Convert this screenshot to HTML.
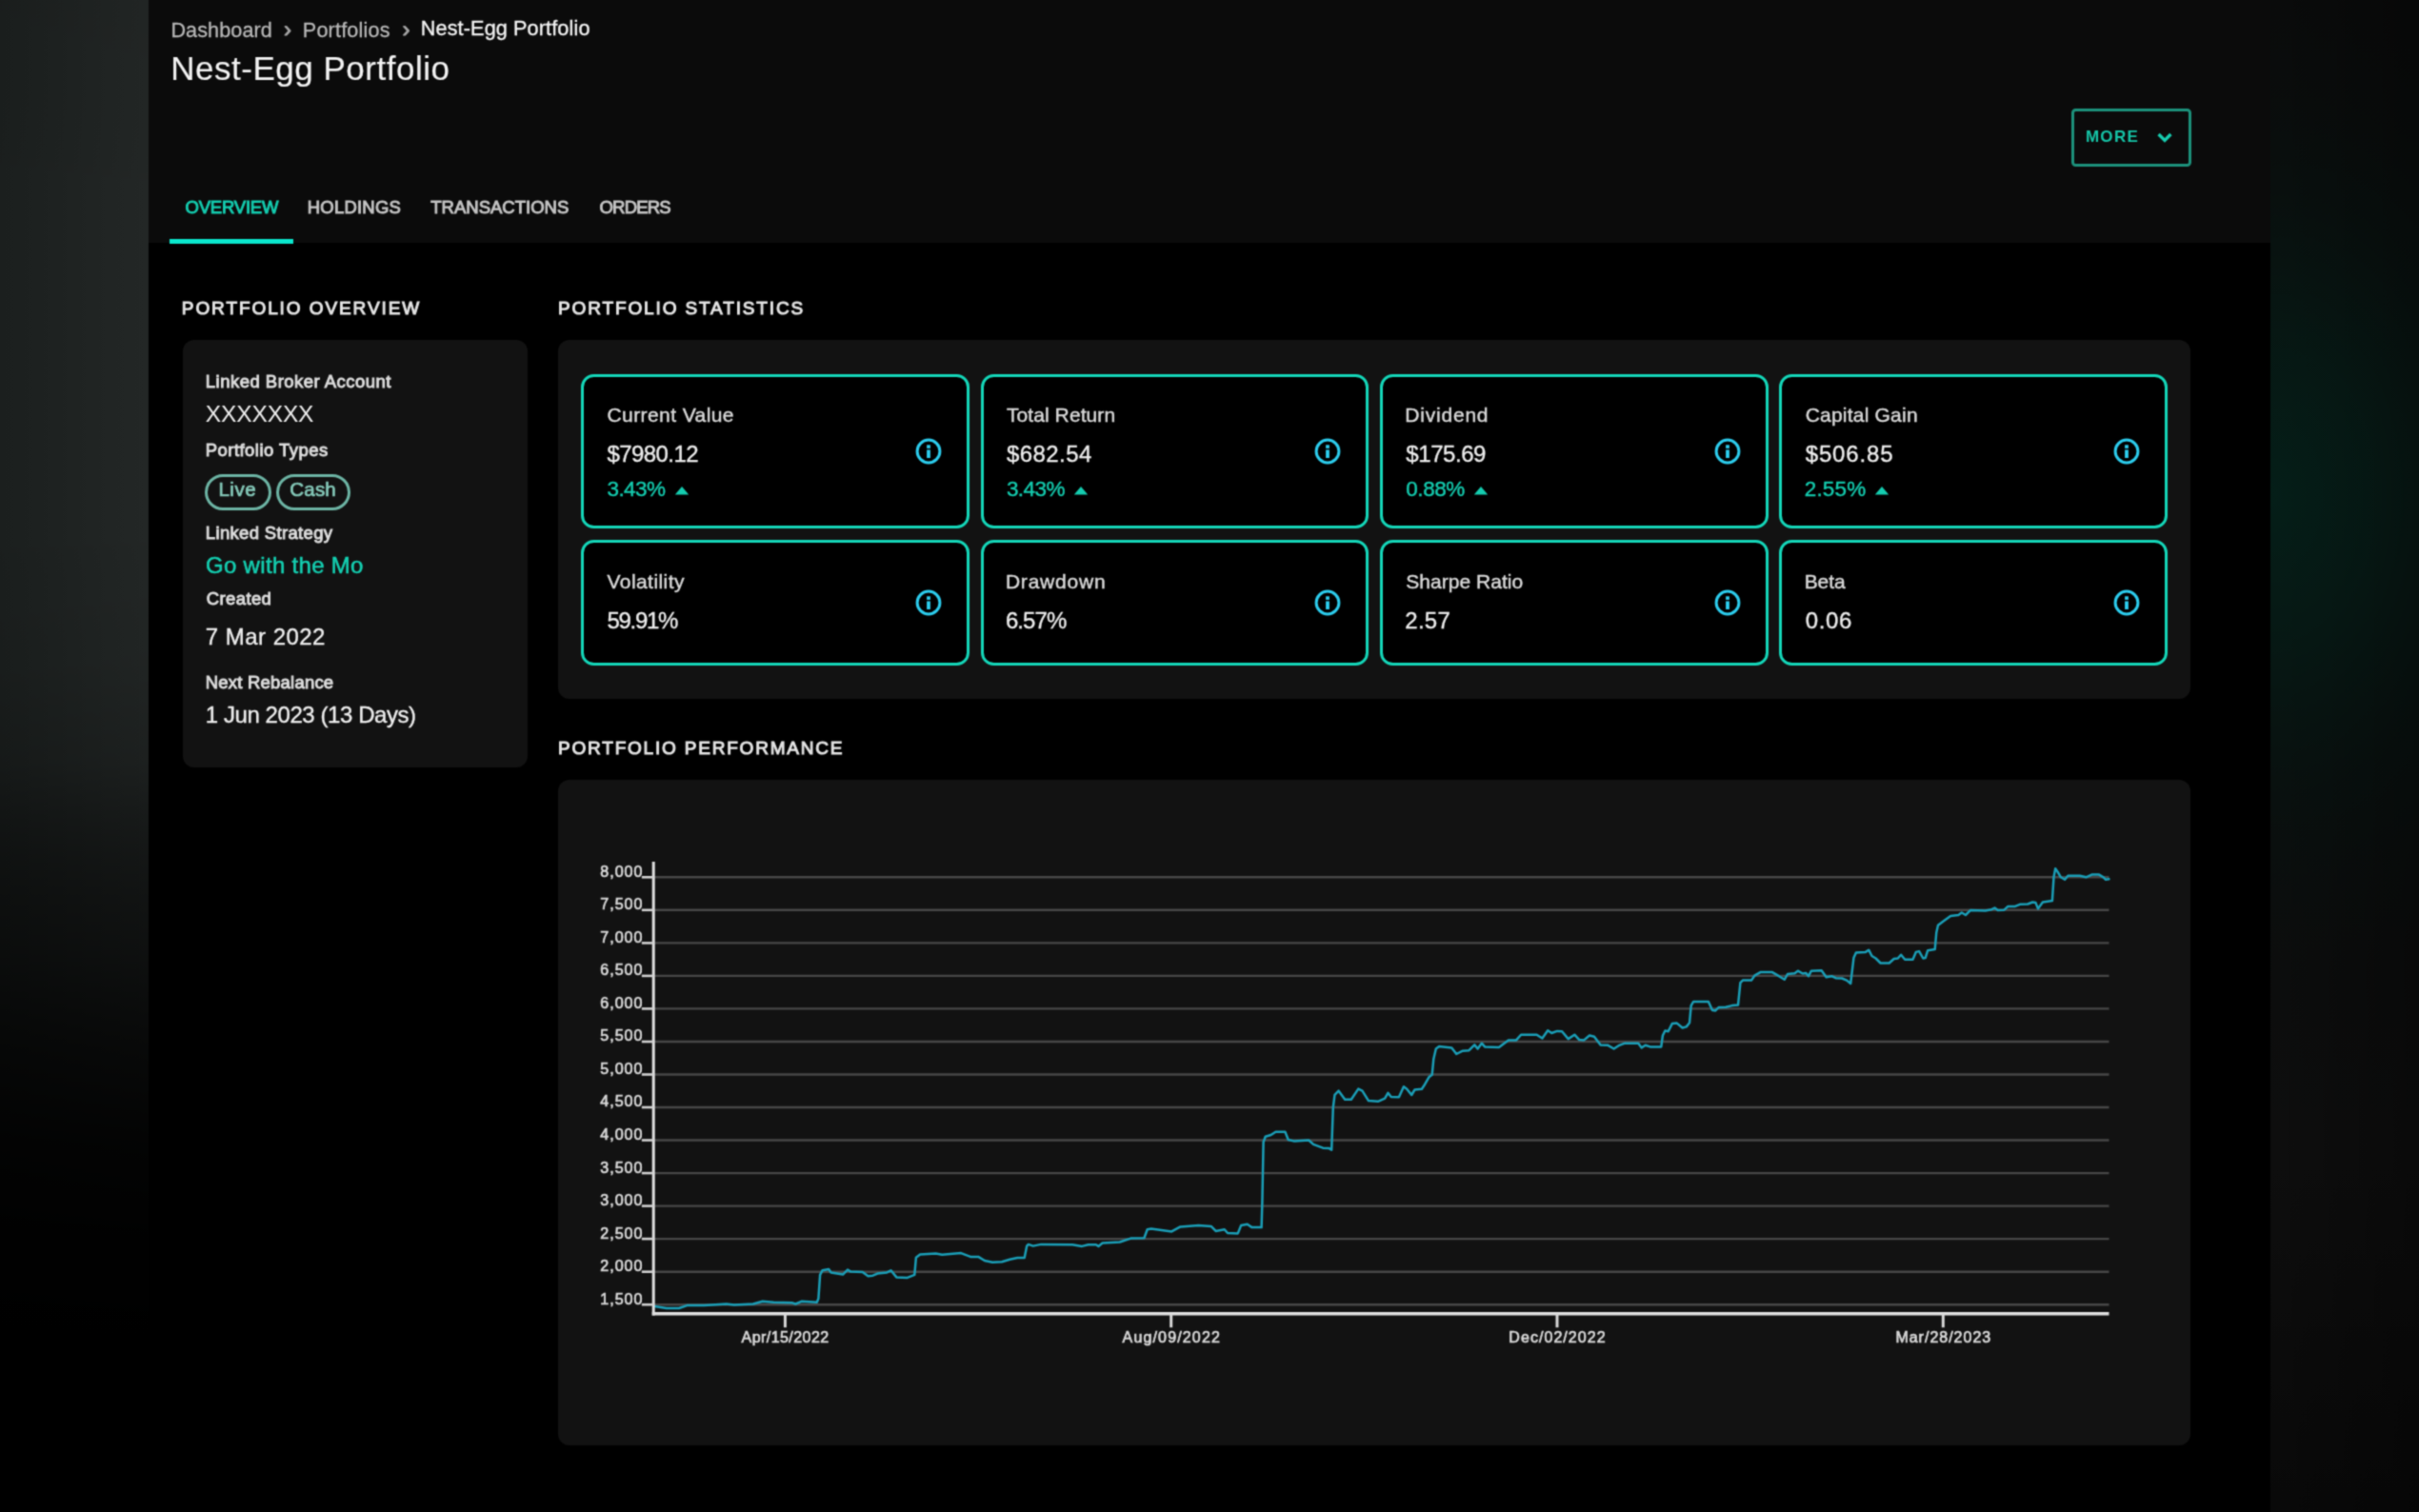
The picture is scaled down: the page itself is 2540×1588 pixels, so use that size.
<!DOCTYPE html>
<html lang="en">
<head>
<meta charset="utf-8">
<title>Nest-Egg Portfolio</title>
<style>
*{box-sizing:border-box;margin:0;padding:0}
html,body{width:2540px;height:1588px;overflow:hidden;background:#000}
body{font-family:"Liberation Sans",sans-serif;color:#e6e6e6;position:relative}
a{text-decoration:none}
#page{position:absolute;left:0;top:0;width:2540px;height:1588px;overflow:hidden;will-change:transform;filter:url(#soft)}
.x{position:absolute;white-space:nowrap;line-height:1;font-weight:400;display:block}
#left{position:absolute;left:0;top:0;width:156px;height:1588px;
  background:linear-gradient(180deg,rgba(0,0,0,.05) 0%,rgba(0,0,0,0) 16%,rgba(0,0,0,0) 34%,rgba(0,0,0,.07) 44%,rgba(0,0,0,.19) 50.4%,rgba(0,0,0,.33) 53.8%,rgba(0,0,0,.43) 56.7%,rgba(0,0,0,.51) 59.5%,rgba(0,0,0,.59) 63%,rgba(0,0,0,.77) 69.3%,rgba(0,0,0,.9) 75.6%,rgba(0,0,0,.97) 82%,#000 90%),linear-gradient(90deg,#1b1f1e 0%,#232726 100%)}
#right{position:absolute;left:2384px;top:0;width:156px;height:1588px;
  background:radial-gradient(ellipse 350px 520px at 0px 520px,rgba(3,36,28,.75) 0%,rgba(3,36,28,.5) 30%,rgba(3,36,28,.33) 45%,rgba(3,36,28,.17) 61%,rgba(3,36,28,.06) 80%,rgba(3,36,28,0) 100%),linear-gradient(90deg,rgba(0,0,0,0) 0%,rgba(0,0,0,.3) 100%),linear-gradient(180deg,#0a0b0b 0%,#0a0c0c 50%,#0c0d0d 65%,#0e0e0e 76%,#0b0b0b 90%,#090909 100%)}
#main{position:absolute;left:156px;top:0;width:2228px;height:1588px;background:#000}
#head{position:absolute;left:0;top:0;width:2228px;height:255.4px;background:#0b0b0b}
.panel{position:absolute;background:#121212;border-radius:12px}
.card{position:absolute;display:block;background:#000;border:3px solid #14d8ba;border-radius:13.5px;width:407.6px}
.pill{position:absolute;display:block;height:38.4px;border:3px solid #6db5a5;border-radius:19.2px}
.more{position:absolute;display:block;background:transparent;border:3px solid #1c927c;border-radius:4.5px;font-family:inherit;cursor:pointer}
.ink{position:absolute;left:178.4px;top:250.7px;width:129.6px;height:4.9px;background:#0ae8ce}
</style>
</head>
<body>
<svg width="0" height="0" style="position:absolute" aria-hidden="true"><filter id="soft" x="0" y="0" width="100%" height="100%" color-interpolation-filters="sRGB"><feConvolveMatrix order="3" kernelMatrix="0.04 0.12 0.04 0.12 0.36 0.12 0.04 0.12 0.04" edgeMode="duplicate" preserveAlpha="false"/></filter></svg>
<div id="page">
<aside id="left"></aside>
<div id="right"></div>
<div id="main"><div id="head"></div></div>

<header>
<nav aria-label="Breadcrumb">
<a href="#" class="x" style="left:179.4px;top:20.5px;font-size:21.6px;letter-spacing:0.1px;color:#b8b8b8;-webkit-text-stroke:0.3px #b8b8b8;">Dashboard</a>
<span class="x" style="left:298px;top:18.6px;font-size:24px;color:#a6a6a6;-webkit-text-stroke:.9px #a6a6a6">›</span>
<a href="#" class="x" style="left:317.8px;top:20.5px;font-size:21.6px;letter-spacing:0.19px;color:#b8b8b8;-webkit-text-stroke:0.3px #b8b8b8;">Portfolios</a>
<span class="x" style="left:422.4px;top:18.6px;font-size:24px;color:#a6a6a6;-webkit-text-stroke:.9px #a6a6a6">›</span>
<span class="x" style="left:441.8px;top:18.9px;font-size:21.6px;letter-spacing:0.14px;color:#f4f4f4;-webkit-text-stroke:0.35px #f4f4f4;">Nest-Egg Portfolio</span>
</nav>
<h1 class="x" style="left:179.3px;top:54.2px;font-size:35px;letter-spacing:0.51px;color:#f4f4f4;-webkit-text-stroke:0.15px #f4f4f4;">Nest-Egg Portfolio</h1>
<button type="button" class="more" style="left:2174.7px;top:113.8px;width:126.5px;height:61.3px">
<span class="x" style="left:12.2px;top:18.4px;font-size:17px;font-weight:700;letter-spacing:1.33px;color:#15c6a8;">MORE</span>
<svg class="x" style="left:84.9px;top:20.4px" width="20" height="16" viewBox="0 0 20 16"><path d="M3.6 4 L10 10.4 L16.4 4" fill="none" stroke="#17cdb0" stroke-width="3.4"/></svg>
</button>
<nav aria-label="Portfolio sections">
<a href="#" class="x" style="left:194.5px;top:209.0px;font-size:18.5px;letter-spacing:-0.2px;color:#14cdb0;-webkit-text-stroke:0.95px #14cdb0;">OVERVIEW</a>
<a href="#" class="x" style="left:322.8px;top:209.0px;font-size:18.5px;letter-spacing:0.2px;color:#c4c4c4;-webkit-text-stroke:0.95px #c4c4c4;">HOLDINGS</a>
<a href="#" class="x" style="left:452.2px;top:209.0px;font-size:18.5px;letter-spacing:0.02px;color:#c4c4c4;-webkit-text-stroke:0.95px #c4c4c4;">TRANSACTIONS</a>
<a href="#" class="x" style="left:629.5px;top:209.0px;font-size:18.5px;letter-spacing:-0.8px;color:#c4c4c4;-webkit-text-stroke:0.95px #c4c4c4;">ORDERS</a>
<div class="ink"></div>
</nav>
</header>

<section aria-label="Portfolio overview">
<h2 class="x" style="left:190.8px;top:313.6px;font-size:19px;letter-spacing:1.92px;color:#e4e4e4;-webkit-text-stroke:1.0px #e4e4e4;">PORTFOLIO OVERVIEW</h2>
<div class="panel" style="left:192.3px;top:356.7px;width:362px;height:449px"></div>
<dl>
<dt class="x" style="left:215.8px;top:391.6px;font-size:18.5px;letter-spacing:0.48px;color:#dcdcdc;-webkit-text-stroke:0.95px #dcdcdc;">Linked Broker Account</dt>
<dd class="x" style="left:215.8px;top:422.5px;font-size:24.5px;letter-spacing:-0.12px;color:#f0f0f0;">XXXXXXX</dd>
<dt class="x" style="left:215.8px;top:463.8px;font-size:18.5px;letter-spacing:0.45px;color:#dcdcdc;-webkit-text-stroke:0.95px #dcdcdc;">Portfolio Types</dt>
<dd><span class="pill" style="left:214.9px;top:497.8px;width:70.2px"><span class="x" style="left:11.5px;top:3.7px;font-size:20.5px;letter-spacing:0.53px;color:#84c8b8;-webkit-text-stroke:0.7px #84c8b8;">Live</span></span>
<span class="pill" style="left:289.7px;top:497.8px;width:78.1px"><span class="x" style="left:11.6px;top:3.7px;font-size:20.5px;letter-spacing:0.2px;color:#84c8b8;-webkit-text-stroke:0.7px #84c8b8;">Cash</span></span></dd>
<dt class="x" style="left:215.8px;top:551.0px;font-size:18.5px;letter-spacing:0.34px;color:#dcdcdc;-webkit-text-stroke:0.95px #dcdcdc;">Linked Strategy</dt>
<a href="#" class="x" style="left:216.0px;top:582.4px;font-size:24px;letter-spacing:0.31px;color:#14d0b2;-webkit-text-stroke:0.5px #14d0b2;">Go with the Mo</a>
<dt class="x" style="left:216.8px;top:619.8px;font-size:18.5px;letter-spacing:0.38px;color:#dcdcdc;-webkit-text-stroke:0.95px #dcdcdc;">Created</dt>
<dd class="x" style="left:215.8px;top:657.2px;font-size:24px;letter-spacing:0.47px;color:#f0f0f0;-webkit-text-stroke:0.35px #f0f0f0;">7 Mar 2022</dd>
<dt class="x" style="left:215.8px;top:708.1px;font-size:18.5px;letter-spacing:0.21px;color:#dcdcdc;-webkit-text-stroke:0.95px #dcdcdc;">Next Rebalance</dt>
<dd class="x" style="left:215.8px;top:739.3px;font-size:24px;letter-spacing:-0.43px;color:#f0f0f0;-webkit-text-stroke:0.35px #f0f0f0;">1 Jun 2023 (13 Days)</dd>
</dl>
</section>

<section aria-label="Portfolio statistics">
<h2 class="x" style="left:586.0px;top:313.6px;font-size:19px;letter-spacing:1.87px;color:#e4e4e4;-webkit-text-stroke:1.0px #e4e4e4;">PORTFOLIO STATISTICS</h2>
<div class="panel" style="left:585.6px;top:356.6px;width:1714.6px;height:377.5px"></div>
<article class="card" style="left:610.2px;top:392.5px;height:162.2px">
<h3 class="x" style="left:24.3px;top:29.9px;font-size:21px;letter-spacing:0.42px;color:#dadada;-webkit-text-stroke:0.45px #dadada;">Current Value</h3>
<p class="x" style="left:24.3px;top:69.7px;font-size:24px;letter-spacing:-0.57px;color:#efefef;-webkit-text-stroke:0.35px #efefef;">$7980.12</p>
<span class="x" style="left:24.3px;top:107.2px;font-size:22.5px;letter-spacing:-0.57px;color:#14cdb0;-webkit-text-stroke:0.4px #14cdb0;">3.43%</span>
<svg class="x" style="left:94.6px;top:114.1px" width="16" height="10" viewBox="0 0 16 10"><path d="M0.8 9.4 L8 1 L15.2 9.4 Z" fill="#14cdb0"/></svg>
<svg class="x" style="left:346.8px;top:63.1px" width="30" height="30" viewBox="0 0 30 30"><circle cx="15" cy="15" r="11.9" fill="none" stroke="#2ccdee" stroke-width="3"/><rect x="13.1" y="8.3" width="3.8" height="3.6" fill="#2ccdee"/><rect x="13.1" y="13.4" width="3.8" height="8.6" fill="#2ccdee"/></svg>
</article>
<article class="card" style="left:1029.6px;top:392.5px;height:162.2px">
<h3 class="x" style="left:24.3px;top:29.9px;font-size:21px;letter-spacing:0.09px;color:#dadada;-webkit-text-stroke:0.45px #dadada;">Total Return</h3>
<p class="x" style="left:24.3px;top:69.7px;font-size:24px;letter-spacing:0.45px;color:#efefef;-webkit-text-stroke:0.35px #efefef;">$682.54</p>
<span class="x" style="left:24.3px;top:107.2px;font-size:22.5px;letter-spacing:-0.57px;color:#14cdb0;-webkit-text-stroke:0.4px #14cdb0;">3.43%</span>
<svg class="x" style="left:94.6px;top:114.1px" width="16" height="10" viewBox="0 0 16 10"><path d="M0.8 9.4 L8 1 L15.2 9.4 Z" fill="#14cdb0"/></svg>
<svg class="x" style="left:346.8px;top:63.1px" width="30" height="30" viewBox="0 0 30 30"><circle cx="15" cy="15" r="11.9" fill="none" stroke="#2ccdee" stroke-width="3"/><rect x="13.1" y="8.3" width="3.8" height="3.6" fill="#2ccdee"/><rect x="13.1" y="13.4" width="3.8" height="8.6" fill="#2ccdee"/></svg>
</article>
<article class="card" style="left:1449.0px;top:392.5px;height:162.2px">
<h3 class="x" style="left:23.3px;top:29.9px;font-size:21px;letter-spacing:0.79px;color:#dadada;-webkit-text-stroke:0.45px #dadada;">Dividend</h3>
<p class="x" style="left:24.3px;top:69.7px;font-size:24px;letter-spacing:-0.43px;color:#efefef;-webkit-text-stroke:0.35px #efefef;">$175.69</p>
<span class="x" style="left:24.3px;top:107.2px;font-size:22.5px;letter-spacing:-0.45px;color:#14cdb0;-webkit-text-stroke:0.4px #14cdb0;">0.88%</span>
<svg class="x" style="left:95.1px;top:114.1px" width="16" height="10" viewBox="0 0 16 10"><path d="M0.8 9.4 L8 1 L15.2 9.4 Z" fill="#14cdb0"/></svg>
<svg class="x" style="left:346.8px;top:63.1px" width="30" height="30" viewBox="0 0 30 30"><circle cx="15" cy="15" r="11.9" fill="none" stroke="#2ccdee" stroke-width="3"/><rect x="13.1" y="8.3" width="3.8" height="3.6" fill="#2ccdee"/><rect x="13.1" y="13.4" width="3.8" height="8.6" fill="#2ccdee"/></svg>
</article>
<article class="card" style="left:1868.4px;top:392.5px;height:162.2px">
<h3 class="x" style="left:24.3px;top:29.9px;font-size:21px;letter-spacing:0.21px;color:#dadada;-webkit-text-stroke:0.45px #dadada;">Capital Gain</h3>
<p class="x" style="left:24.3px;top:69.7px;font-size:24px;letter-spacing:0.85px;color:#efefef;-webkit-text-stroke:0.35px #efefef;">$506.85</p>
<span class="x" style="left:23.3px;top:107.2px;font-size:22.5px;letter-spacing:0.2px;color:#14cdb0;-webkit-text-stroke:0.4px #14cdb0;">2.55%</span>
<svg class="x" style="left:96.7px;top:114.1px" width="16" height="10" viewBox="0 0 16 10"><path d="M0.8 9.4 L8 1 L15.2 9.4 Z" fill="#14cdb0"/></svg>
<svg class="x" style="left:346.8px;top:63.1px" width="30" height="30" viewBox="0 0 30 30"><circle cx="15" cy="15" r="11.9" fill="none" stroke="#2ccdee" stroke-width="3"/><rect x="13.1" y="8.3" width="3.8" height="3.6" fill="#2ccdee"/><rect x="13.1" y="13.4" width="3.8" height="8.6" fill="#2ccdee"/></svg>
</article>
<article class="card" style="left:610.2px;top:567.1px;height:131.5px">
<h3 class="x" style="left:24.3px;top:29.5px;font-size:21px;letter-spacing:0.44px;color:#dadada;-webkit-text-stroke:0.45px #dadada;">Volatility</h3>
<p class="x" style="left:24.3px;top:69.7px;font-size:24px;letter-spacing:-1.32px;color:#efefef;-webkit-text-stroke:0.35px #efefef;">59.91%</p>
<svg class="x" style="left:346.8px;top:47.8px" width="30" height="30" viewBox="0 0 30 30"><circle cx="15" cy="15" r="11.9" fill="none" stroke="#2ccdee" stroke-width="3"/><rect x="13.1" y="8.3" width="3.8" height="3.6" fill="#2ccdee"/><rect x="13.1" y="13.4" width="3.8" height="8.6" fill="#2ccdee"/></svg>
</article>
<article class="card" style="left:1029.6px;top:567.1px;height:131.5px">
<h3 class="x" style="left:23.3px;top:29.5px;font-size:21px;letter-spacing:0.79px;color:#dadada;-webkit-text-stroke:0.45px #dadada;">Drawdown</h3>
<p class="x" style="left:23.3px;top:69.7px;font-size:24px;letter-spacing:-0.93px;color:#efefef;-webkit-text-stroke:0.35px #efefef;">6.57%</p>
<svg class="x" style="left:346.8px;top:47.8px" width="30" height="30" viewBox="0 0 30 30"><circle cx="15" cy="15" r="11.9" fill="none" stroke="#2ccdee" stroke-width="3"/><rect x="13.1" y="8.3" width="3.8" height="3.6" fill="#2ccdee"/><rect x="13.1" y="13.4" width="3.8" height="8.6" fill="#2ccdee"/></svg>
</article>
<article class="card" style="left:1449.0px;top:567.1px;height:131.5px">
<h3 class="x" style="left:24.3px;top:29.5px;font-size:21px;letter-spacing:0.03px;color:#dadada;-webkit-text-stroke:0.45px #dadada;">Sharpe Ratio</h3>
<p class="x" style="left:23.3px;top:69.7px;font-size:24px;letter-spacing:0.27px;color:#efefef;-webkit-text-stroke:0.35px #efefef;">2.57</p>
<svg class="x" style="left:346.8px;top:47.8px" width="30" height="30" viewBox="0 0 30 30"><circle cx="15" cy="15" r="11.9" fill="none" stroke="#2ccdee" stroke-width="3"/><rect x="13.1" y="8.3" width="3.8" height="3.6" fill="#2ccdee"/><rect x="13.1" y="13.4" width="3.8" height="8.6" fill="#2ccdee"/></svg>
</article>
<article class="card" style="left:1868.4px;top:567.1px;height:131.5px">
<h3 class="x" style="left:23.3px;top:29.5px;font-size:21px;letter-spacing:-0.1px;color:#dadada;-webkit-text-stroke:0.45px #dadada;">Beta</h3>
<p class="x" style="left:24.3px;top:69.7px;font-size:24px;letter-spacing:0.63px;color:#efefef;-webkit-text-stroke:0.35px #efefef;">0.06</p>
<svg class="x" style="left:346.8px;top:47.8px" width="30" height="30" viewBox="0 0 30 30"><circle cx="15" cy="15" r="11.9" fill="none" stroke="#2ccdee" stroke-width="3"/><rect x="13.1" y="8.3" width="3.8" height="3.6" fill="#2ccdee"/><rect x="13.1" y="13.4" width="3.8" height="8.6" fill="#2ccdee"/></svg>
</article>
</section>

<section aria-label="Portfolio performance">
<h2 class="x" style="left:586.0px;top:775.6px;font-size:19px;letter-spacing:1.8px;color:#e4e4e4;-webkit-text-stroke:1.0px #e4e4e4;">PORTFOLIO PERFORMANCE</h2>
<div class="panel" style="left:585.6px;top:819.1px;width:1714.6px;height:699.4px"></div>
<svg id="chart" style="position:absolute;left:0;top:0" width="2540" height="1588" viewBox="0 0 2540 1588" font-family="'Liberation Sans',sans-serif">
<line x1="686.2" y1="921.3" x2="2214.5" y2="921.3" stroke="#474747" stroke-width="2.4"/>
<line x1="686.2" y1="955.8" x2="2214.5" y2="955.8" stroke="#474747" stroke-width="2.4"/>
<line x1="686.2" y1="990.4" x2="2214.5" y2="990.4" stroke="#474747" stroke-width="2.4"/>
<line x1="686.2" y1="1024.9" x2="2214.5" y2="1024.9" stroke="#474747" stroke-width="2.4"/>
<line x1="686.2" y1="1059.4" x2="2214.5" y2="1059.4" stroke="#474747" stroke-width="2.4"/>
<line x1="686.2" y1="1094.0" x2="2214.5" y2="1094.0" stroke="#474747" stroke-width="2.4"/>
<line x1="686.2" y1="1128.5" x2="2214.5" y2="1128.5" stroke="#474747" stroke-width="2.4"/>
<line x1="686.2" y1="1163.0" x2="2214.5" y2="1163.0" stroke="#474747" stroke-width="2.4"/>
<line x1="686.2" y1="1197.5" x2="2214.5" y2="1197.5" stroke="#474747" stroke-width="2.4"/>
<line x1="686.2" y1="1232.1" x2="2214.5" y2="1232.1" stroke="#474747" stroke-width="2.4"/>
<line x1="686.2" y1="1266.6" x2="2214.5" y2="1266.6" stroke="#474747" stroke-width="2.4"/>
<line x1="686.2" y1="1301.1" x2="2214.5" y2="1301.1" stroke="#474747" stroke-width="2.4"/>
<line x1="686.2" y1="1335.7" x2="2214.5" y2="1335.7" stroke="#474747" stroke-width="2.4"/>
<line x1="686.2" y1="1370.2" x2="2214.5" y2="1370.2" stroke="#474747" stroke-width="2.4"/>
<polyline fill="none" stroke="#1a9fb8" stroke-width="2.5" stroke-linejoin="round" stroke-linecap="round" points="687.4,1372 699.8,1374 713,1374 721.3,1371.1 739.5,1371.1 762.7,1369.5 770.9,1370.6 790.8,1369.5 800.7,1366.7 812.3,1367.8 832.1,1368.3 835.4,1369.5 842,1366.7 857.8,1367.8 859.4,1363.7 861.1,1338.9 863.5,1334.3 870.2,1333.1 872.6,1336.4 885,1338.6 890,1333.6 893.3,1335.6 905.7,1335.9 911.5,1340.2 916.5,1339.7 921.4,1337.6 931.3,1336.4 935.5,1334.3 941.3,1341.4 952.8,1341.9 960.3,1338.9 961.9,1320.7 966.1,1317.4 982.6,1316.6 989.2,1317.7 1009.1,1316.1 1019,1319.9 1027.2,1319.9 1033.9,1324 1042.1,1325.7 1052,1325.3 1060.3,1322.7 1068.3,1321 1075.7,1321 1078.2,1308.6 1079.8,1306.9 1084.8,1308.6 1093.1,1306.9 1126.1,1307.3 1136.1,1308.9 1142.7,1307.3 1150.9,1307.3 1153.4,1308.9 1157.6,1305.6 1175.8,1304.5 1187.3,1300.6 1201.4,1300.3 1204.7,1291.2 1208.8,1290.4 1230.3,1293.4 1239.4,1288.4 1258.4,1287.1 1271.7,1287.9 1276.6,1292.9 1285.7,1291.2 1289,1295 1299.8,1295.4 1303.1,1287.1 1309.7,1285.8 1314.6,1289.1 1324.6,1289.1 1325.4,1262.3 1326.6,1199.5 1328.7,1193.7 1334.5,1192 1339.5,1188.7 1349.4,1188.7 1352.7,1197 1359.3,1198.6 1374.2,1197.5 1379.1,1201.9 1389.1,1205.7 1395.7,1206.1 1398.2,1207.7 1399.8,1163.1 1401.5,1149.8 1405.6,1145.7 1412.2,1154.8 1418.8,1154.8 1426.3,1143.6 1430.4,1145.7 1437,1156.1 1446.9,1156.8 1454.1,1153.6 1457.4,1147.8 1460.7,1152 1468.9,1152.3 1473.9,1141.2 1477.2,1143.7 1482.2,1150 1485.5,1144.5 1492.9,1143.7 1496.2,1138.7 1500.4,1131.3 1503.7,1128.8 1505.3,1112.3 1507.8,1101.5 1511.1,1099.1 1524.3,1100.4 1529.3,1107 1535.9,1103.7 1542.5,1103.2 1548.3,1097.4 1551.6,1101.5 1555.8,1095.7 1559.1,1099.4 1573.9,1099.9 1583.9,1092.4 1592.1,1092.4 1597.1,1086.7 1613.6,1086.7 1619.4,1090.5 1625.2,1082.2 1629.3,1085 1635.1,1082.9 1640.1,1083.3 1646.7,1091.1 1653.3,1086.7 1658.3,1092.1 1663.2,1092.4 1669,1087.5 1674,1088.8 1680.6,1097.4 1688,1097.7 1694.6,1101.5 1699.6,1098.2 1706.2,1095.7 1720.3,1095.7 1723.6,1100.4 1727.7,1097.7 1732.7,1099.4 1744.3,1099.4 1745.9,1087.5 1748.4,1082.5 1751.7,1083.3 1755.8,1075.1 1760.8,1074.6 1766.6,1079.5 1770.7,1078.4 1774,1074.3 1775.7,1056.1 1778.2,1051.9 1793.9,1051.9 1798,1061 1801.3,1061.4 1804.6,1058 1812.1,1057.7 1818.7,1056.1 1825,1055.6 1827.4,1032.1 1829.9,1029.6 1839,1029.6 1842.3,1024.7 1848.9,1020.9 1860.5,1020.9 1867.1,1024.7 1873.7,1028.8 1877,1023 1884.5,1022.2 1887.8,1019.7 1892.8,1022.5 1896.1,1021.9 1899,1025.2 1901.9,1019.7 1912.6,1019.2 1917.6,1026.3 1923.3,1025.2 1927.5,1027.2 1934.1,1027.5 1939.1,1029.6 1943.2,1033 1946.5,1005.7 1949,1000.4 1958.9,999.9 1962.2,997.7 1965.5,1004 1969.6,1006.5 1974.6,1011.5 1983.7,1011.5 1988.7,1007 1992.8,1006.5 1996.1,1002.7 2000.2,1007.7 2008.5,1007.7 2011.8,999.9 2015.1,999.1 2019.3,1006.5 2021.7,1006 2024.2,998.2 2031.7,997.1 2033.3,979.2 2035,971.8 2041.6,966.8 2048.2,961.9 2056.5,961 2059.8,958.5 2063.9,961 2068.9,956.1 2084.6,956.4 2091.2,955.2 2094.5,953.6 2097.8,956.1 2104.4,955.7 2108.5,951.9 2116,951.9 2120.9,949.8 2129.2,949.5 2134.2,947.5 2137.5,948.1 2140,954.4 2144.9,947.5 2154.9,946.1 2156.5,921.3 2158.2,912.2 2160.6,915.6 2163.9,921.3 2168.1,923.8 2171.4,919.7 2183.8,919.7 2190.4,921.3 2197,918.4 2203.6,918.4 2208.6,921.3 2211.1,923.8 2214.4,923.3"/>
<line x1="686.2" y1="905" x2="686.2" y2="1381.5" stroke="#e0e0e0" stroke-width="3"/>
<line x1="684.7" y1="1379.8" x2="2214.5" y2="1379.8" stroke="#e0e0e0" stroke-width="3.4"/>
<line x1="673.8" y1="921.3" x2="686.2" y2="921.3" stroke="#d0d0d0" stroke-width="2.6"/>
<text x="675.4" y="920.7" text-anchor="end" font-size="16" letter-spacing="1.0" fill="#d8d8d8" stroke="#d8d8d8" stroke-width="0.7">8,000</text>
<line x1="673.8" y1="955.8" x2="686.2" y2="955.8" stroke="#d0d0d0" stroke-width="2.6"/>
<text x="675.4" y="955.2" text-anchor="end" font-size="16" letter-spacing="1.0" fill="#d8d8d8" stroke="#d8d8d8" stroke-width="0.7">7,500</text>
<line x1="673.8" y1="990.4" x2="686.2" y2="990.4" stroke="#d0d0d0" stroke-width="2.6"/>
<text x="675.4" y="989.8" text-anchor="end" font-size="16" letter-spacing="1.0" fill="#d8d8d8" stroke="#d8d8d8" stroke-width="0.7">7,000</text>
<line x1="673.8" y1="1024.9" x2="686.2" y2="1024.9" stroke="#d0d0d0" stroke-width="2.6"/>
<text x="675.4" y="1024.3" text-anchor="end" font-size="16" letter-spacing="1.0" fill="#d8d8d8" stroke="#d8d8d8" stroke-width="0.7">6,500</text>
<line x1="673.8" y1="1059.4" x2="686.2" y2="1059.4" stroke="#d0d0d0" stroke-width="2.6"/>
<text x="675.4" y="1058.8" text-anchor="end" font-size="16" letter-spacing="1.0" fill="#d8d8d8" stroke="#d8d8d8" stroke-width="0.7">6,000</text>
<line x1="673.8" y1="1094.0" x2="686.2" y2="1094.0" stroke="#d0d0d0" stroke-width="2.6"/>
<text x="675.4" y="1093.4" text-anchor="end" font-size="16" letter-spacing="1.0" fill="#d8d8d8" stroke="#d8d8d8" stroke-width="0.7">5,500</text>
<line x1="673.8" y1="1128.5" x2="686.2" y2="1128.5" stroke="#d0d0d0" stroke-width="2.6"/>
<text x="675.4" y="1127.9" text-anchor="end" font-size="16" letter-spacing="1.0" fill="#d8d8d8" stroke="#d8d8d8" stroke-width="0.7">5,000</text>
<line x1="673.8" y1="1163.0" x2="686.2" y2="1163.0" stroke="#d0d0d0" stroke-width="2.6"/>
<text x="675.4" y="1162.4" text-anchor="end" font-size="16" letter-spacing="1.0" fill="#d8d8d8" stroke="#d8d8d8" stroke-width="0.7">4,500</text>
<line x1="673.8" y1="1197.5" x2="686.2" y2="1197.5" stroke="#d0d0d0" stroke-width="2.6"/>
<text x="675.4" y="1196.9" text-anchor="end" font-size="16" letter-spacing="1.0" fill="#d8d8d8" stroke="#d8d8d8" stroke-width="0.7">4,000</text>
<line x1="673.8" y1="1232.1" x2="686.2" y2="1232.1" stroke="#d0d0d0" stroke-width="2.6"/>
<text x="675.4" y="1231.5" text-anchor="end" font-size="16" letter-spacing="1.0" fill="#d8d8d8" stroke="#d8d8d8" stroke-width="0.7">3,500</text>
<line x1="673.8" y1="1266.6" x2="686.2" y2="1266.6" stroke="#d0d0d0" stroke-width="2.6"/>
<text x="675.4" y="1266.0" text-anchor="end" font-size="16" letter-spacing="1.0" fill="#d8d8d8" stroke="#d8d8d8" stroke-width="0.7">3,000</text>
<line x1="673.8" y1="1301.1" x2="686.2" y2="1301.1" stroke="#d0d0d0" stroke-width="2.6"/>
<text x="675.4" y="1300.5" text-anchor="end" font-size="16" letter-spacing="1.0" fill="#d8d8d8" stroke="#d8d8d8" stroke-width="0.7">2,500</text>
<line x1="673.8" y1="1335.7" x2="686.2" y2="1335.7" stroke="#d0d0d0" stroke-width="2.6"/>
<text x="675.4" y="1335.1" text-anchor="end" font-size="16" letter-spacing="1.0" fill="#d8d8d8" stroke="#d8d8d8" stroke-width="0.7">2,000</text>
<line x1="673.8" y1="1370.2" x2="686.2" y2="1370.2" stroke="#d0d0d0" stroke-width="2.6"/>
<text x="675.4" y="1369.6" text-anchor="end" font-size="16" letter-spacing="1.0" fill="#d8d8d8" stroke="#d8d8d8" stroke-width="0.7">1,500</text>
<line x1="824.4" y1="1379.8" x2="824.4" y2="1394.2" stroke="#d8d8d8" stroke-width="3"/>
<text x="824.6" y="1409.6" text-anchor="middle" font-size="16" letter-spacing="0.45" fill="#d8d8d8" stroke="#d8d8d8" stroke-width="0.7">Apr/15/2022</text>
<line x1="1229.7" y1="1379.8" x2="1229.7" y2="1394.2" stroke="#d8d8d8" stroke-width="3"/>
<text x="1230.3" y="1409.6" text-anchor="middle" font-size="16" letter-spacing="1.15" fill="#d8d8d8" stroke="#d8d8d8" stroke-width="0.7">Aug/09/2022</text>
<line x1="1635.0" y1="1379.8" x2="1635.0" y2="1394.2" stroke="#d8d8d8" stroke-width="3"/>
<text x="1635.5" y="1409.6" text-anchor="middle" font-size="16" letter-spacing="1.05" fill="#d8d8d8" stroke="#d8d8d8" stroke-width="0.7">Dec/02/2022</text>
<line x1="2040.3" y1="1379.8" x2="2040.3" y2="1394.2" stroke="#d8d8d8" stroke-width="3"/>
<text x="2040.8" y="1409.6" text-anchor="middle" font-size="16" letter-spacing="1.0" fill="#d8d8d8" stroke="#d8d8d8" stroke-width="0.7">Mar/28/2023</text>
</svg>
</section>
</div>
</body>
</html>
